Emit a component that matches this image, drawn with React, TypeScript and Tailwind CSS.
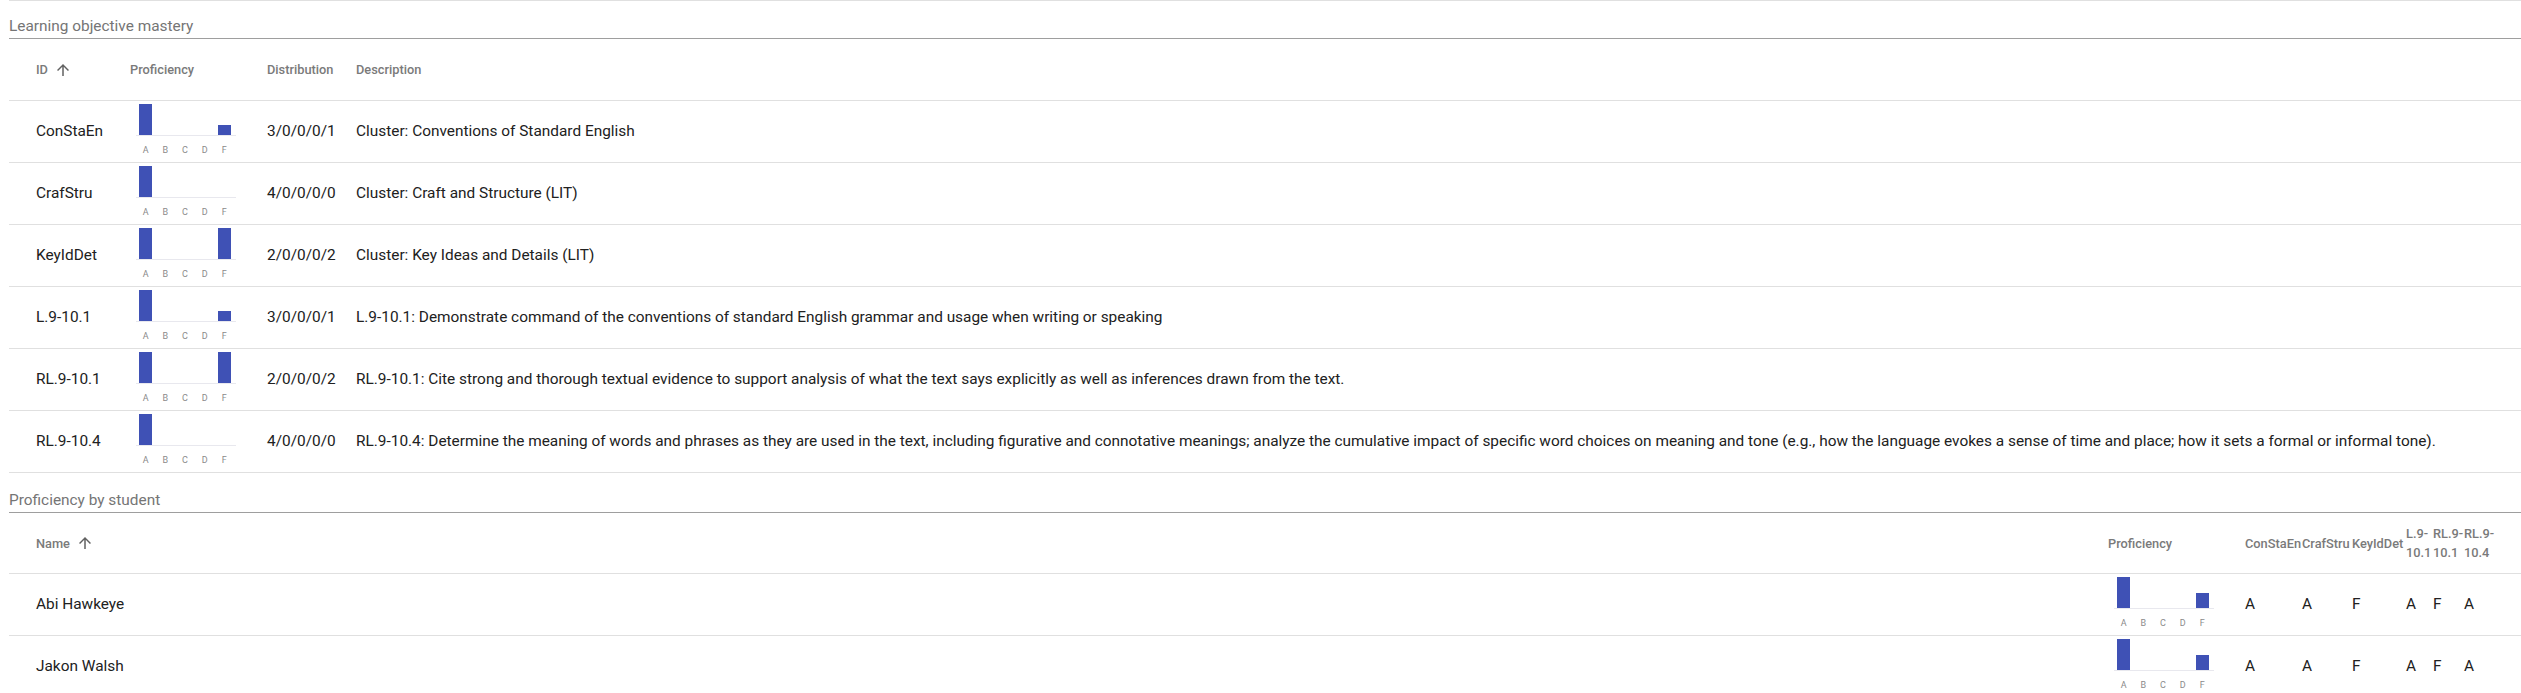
import React from 'react';

type Objective = { id: string; counts: number[]; description: string };

const objectives: Objective[] = [
  { id: 'ConStaEn', counts: [3, 0, 0, 0, 1], description: 'Cluster: Conventions of Standard English' },
  { id: 'CrafStru', counts: [4, 0, 0, 0, 0], description: 'Cluster: Craft and Structure (LIT)' },
  { id: 'KeyIdDet', counts: [2, 0, 0, 0, 2], description: 'Cluster: Key Ideas and Details (LIT)' },
  {
    id: 'L.9-10.1',
    counts: [3, 0, 0, 0, 1],
    description: 'L.9-10.1: Demonstrate command of the conventions of standard English grammar and usage when writing or speaking',
  },
  {
    id: 'RL.9-10.1',
    counts: [2, 0, 0, 0, 2],
    description:
      'RL.9-10.1: Cite strong and thorough textual evidence to support analysis of what the text says explicitly as well as inferences drawn from the text.',
  },
  {
    id: 'RL.9-10.4',
    counts: [4, 0, 0, 0, 0],
    description:
      'RL.9-10.4: Determine the meaning of words and phrases as they are used in the text, including figurative and connotative meanings; analyze the cumulative impact of specific word choices on meaning and tone (e.g., how the language evokes a sense of time and place; how it sets a formal or informal tone).',
  },
];

const students = [
  { name: 'Abi Hawkeye', counts: [4, 0, 0, 0, 2], grades: ['A', 'A', 'F', 'A', 'F', 'A'] },
  { name: 'Jakon Walsh', counts: [4, 0, 0, 0, 2], grades: ['A', 'A', 'F', 'A', 'F', 'A'] },
];

const letters = ['A', 'B', 'C', 'D', 'F'];

// petit histogramme A..F
const Histogram: React.FC<{ counts: number[] }> = ({ counts }) => {
  const max = Math.max(...counts);
  return (
    <div className="ml-[6px] w-[100px]">
      <div className="h-[31px] w-[98px] flex items-end">
        {counts.map((c, i) => (
          <div key={i} className="flex-1 h-full flex items-end justify-center">
            {c > 0 && <div className="w-[13px] bg-[#3f51b5]" style={{ height: `${(c / max) * 100}%` }} />}
          </div>
        ))}
      </div>
      <div className="h-px w-[100px] bg-[#e8e8ee]" />
      <div className="mt-[8px] w-[98px] flex text-[9px] leading-[12px] text-[#8a8a8a]">
        {letters.map((l) => (
          <div key={l} className="flex-1 text-center">
            {l}
          </div>
        ))}
      </div>
    </div>
  );
};

const SortArrow: React.FC = () => (
  <svg viewBox="0 0 24 24" className="ml-[6px] w-[18px] h-[18px] fill-[#616161]">
    <path d="M4 12l1.41 1.41L11 7.83V20h2V7.83l5.58 5.59L20 12l-8-8-8 8z" />
  </svg>
);

export default function App() {
  return (
    <div className="h-[693px] overflow-hidden bg-white pl-[9px] font-['Roboto','Liberation_Sans',sans-serif]">
      {/* Learning objective mastery */}
      <div className="border-t border-[#e0e0e0]">
        <div className="h-[38px] flex items-end pb-[1px] border-b border-[#9e9e9e] text-[15.4px] leading-[21px] text-[#757575]">
          Learning objective mastery
        </div>
        <div className="grid grid-cols-[121px_137px_89px_1fr] h-[62px] border-b border-[#e0e0e0] items-center text-[12.8px] font-medium text-[#7a7a7a]">
          <div className="pl-[27px] flex items-center">
            ID
            <SortArrow />
          </div>
          <div>Proficiency</div>
          <div>Distribution</div>
          <div>Description</div>
        </div>
        {objectives.map((o) => (
          <div
            key={o.id}
            className="grid grid-cols-[121px_137px_89px_1fr] h-[62px] border-b border-[#e0e0e0] items-center text-[15.4px] text-[#212121]"
          >
            <div className="pl-[27px]">{o.id}</div>
            <div className="self-start pt-[3px]">
              <Histogram counts={o.counts} />
            </div>
            <div>{o.counts.join('/')}</div>
            <div className="whitespace-nowrap">{o.description}</div>
          </div>
        ))}
      </div>

      {/* Proficiency by student */}
      <div>
        <div className="h-[40px] flex items-end pb-[1px] border-b border-[#9e9e9e] text-[15.4px] leading-[21px] text-[#757575]">
          Proficiency by student
        </div>
        <div className="grid grid-cols-[1fr_137px_57px_50px_54px_27px_31px_31px] pr-[26px] h-[61px] border-b border-[#e0e0e0] items-center text-[12.8px] leading-[19px] font-medium text-[#7a7a7a]">
          <div className="pl-[27px] flex items-center">
            Name
            <SortArrow />
          </div>
          <div>Proficiency</div>
          {objectives.map((o) => (
            <div key={o.id}>{o.id}</div>
          ))}
        </div>
        {students.map((s) => (
          <div
            key={s.name}
            className="grid grid-cols-[1fr_137px_57px_50px_54px_27px_31px_31px] pr-[26px] h-[62px] border-b border-[#e0e0e0] items-center text-[15.4px] text-[#212121]"
          >
            <div className="pl-[27px]">{s.name}</div>
            <div className="self-start pt-[3px]">
              <Histogram counts={s.counts} />
            </div>
            {s.grades.map((g, i) => (
              <div key={i}>{g}</div>
            ))}
          </div>
        ))}
      </div>
    </div>
  );
}
